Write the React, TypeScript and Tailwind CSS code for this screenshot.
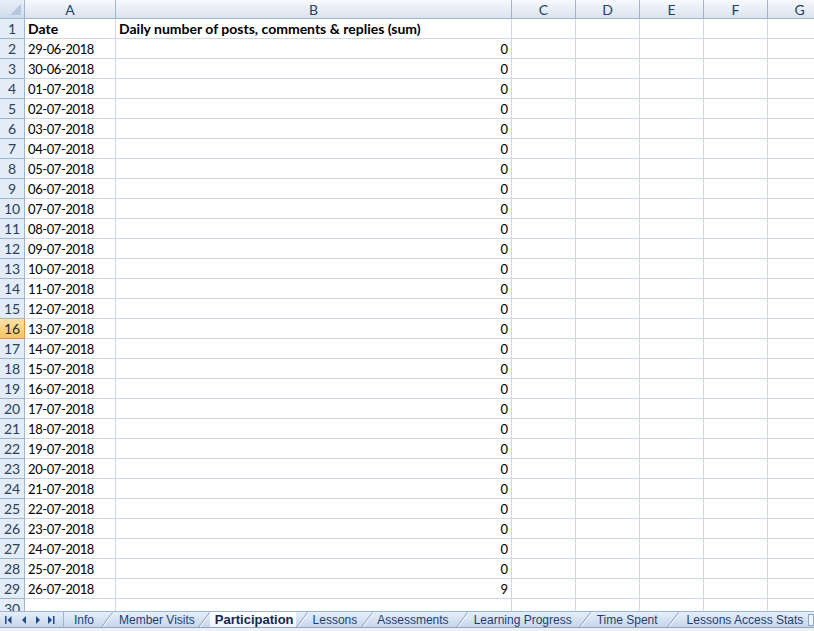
import React from "react";

const COLS = ["A", "B", "C", "D", "E", "F", "G", "H"];
const WIDTHS = ["w-[91px]", "w-[396px]", "w-[64px]", "w-[64px]", "w-[64px]", "w-[64px]", "w-[64px]", "w-[64px]"];

const START = new Date(2018, 5, 29);

function fmt(d: Date) {
  const dd = String(d.getDate()).padStart(2, "0");
  const mm = String(d.getMonth() + 1).padStart(2, "0");
  return `${dd}-${mm}-${d.getFullYear()}`;
}

const rows: { date: string; value: number }[] = Array.from({ length: 28 }, (_, i) => {
  const d = new Date(START);
  d.setDate(START.getDate() + i);
  return { date: fmt(d), value: i === 27 ? 9 : 0 };
});

// padding per tab so the labels sit where the sheet tabs are
const TABS: { name: string; pad: string }[] = [
  { name: "Info", pad: "pl-[10px] pr-[7px]" },
  { name: "Member Visits", pad: "pl-[6px] pr-[3px]" },
  { name: "Participation", pad: "pl-[5px] pr-[2px]" },
  { name: "Lessons", pad: "pl-[5px] pr-[4px]" },
  { name: "Assessments", pad: "pl-[4px] pr-[7px]" },
  { name: "Learning Progress", pad: "pl-[6px] pr-[7px]" },
  { name: "Time Spent", pad: "pl-[6px] pr-[9px]" },
  { name: "Lessons Access Stats", pad: "pl-[8px] pr-[3px]" },
];

const cellFont = { fontFamily: "Lato, 'Liberation Sans', sans-serif" };

const RowHead: React.FC<{ n: number; active?: boolean }> = ({ n, active }) => (
  <div
    className={`h-[20px] w-[25px] shrink-0 border-r border-b text-center text-[14px] leading-[20px] ${
      active
        ? "bg-gradient-to-b from-[#fbe2a8] to-[#f5c462] border-[#f29536] text-[#2b2b2b]"
        : "bg-[#e4ecf7] border-[#9eb6ce] text-[#27415f]"
    }`}
  >
    {n}
  </div>
);

const Slash: React.FC = () => (
  <svg width="12" height="15" viewBox="0 0 12 15" className="shrink-0">
    <line x1="0.5" y1="15" x2="11.5" y2="0.5" stroke="#8ea5c4" strokeWidth="1" />
    <line x1="2" y1="15" x2="12" y2="2" stroke="#f4f8fd" strokeWidth="1" />
  </svg>
);

const NavArrows: React.FC = () => (
  <svg width="63" height="15" viewBox="0 0 63 15" className="shrink-0">
    <g fill="#1f4c8f">
      <rect x="5" y="4" width="1.5" height="8" />
      <path d="M7.5 8 L11.5 4 L11.5 12 Z" />
      <path d="M22 8 L26 4 L26 12 Z" />
      <path d="M40 8 L36 4 L36 12 Z" />
      <path d="M52 8 L48 4 L48 12 Z" />
      <rect x="53" y="4" width="1.5" height="8" />
    </g>
  </svg>
);

export default function App() {
  return (
    <div className="w-[814px] h-[631px] overflow-hidden bg-white flex flex-col" style={cellFont}>
      <div className="flex-1 overflow-hidden">
        {/* column headers */}
        <div className="flex h-[19px]">
          <div className="relative w-[25px] h-[19px] shrink-0 border-r border-b border-[#9eb6ce] bg-gradient-to-b from-[#e9eff7] to-[#cfdcec]">
            <svg width="12" height="12" viewBox="0 0 12 12" className="absolute right-[2px] bottom-[2px]">
              <path d="M11 0 L11 11 L0 11 Z" fill="#b5c7de" />
            </svg>
          </div>
          {COLS.map((c, i) => (
            <div
              key={c}
              className={`${WIDTHS[i]} h-[19px] shrink-0 border-r border-b border-[#9eb6ce] bg-gradient-to-b from-[#f7f9fc] to-[#dbe3ee] text-center text-[14px] leading-[19px] text-[#27415f]`}
            >
              {c}
            </div>
          ))}
        </div>

        {/* row 1 */}
        <div className="flex">
          <RowHead n={1} />
          <div className="w-[91px] h-[20px] shrink-0 border-r border-b border-[#d0d7e5] px-[3px] text-[14px] leading-[20px] font-bold">
            Date
          </div>
          <div className="w-[396px] h-[20px] shrink-0 border-r border-b border-[#d0d7e5] px-[3px] text-[14px] leading-[20px] font-bold whitespace-nowrap">
            Daily number of posts, comments &amp; replies (sum)
          </div>
          {WIDTHS.slice(2).map((w, i) => (
            <div key={i} className={`${w} h-[20px] shrink-0 border-r border-b border-[#d0d7e5]`} />
          ))}
        </div>

        {rows.map((r, idx) => (
          <div key={r.date} className="flex">
            <RowHead n={idx + 2} active={idx + 2 === 16} />
            <div className="w-[91px] h-[20px] shrink-0 border-r border-b border-[#d0d7e5] px-[3px] text-[13px] tracking-[-0.4px] leading-[20px]">
              {r.date}
            </div>
            <div className="w-[396px] h-[20px] shrink-0 border-r border-b border-[#d0d7e5] px-[3px] text-right text-[13px] leading-[20px]">
              {r.value}
            </div>
            {WIDTHS.slice(2).map((w, i) => (
              <div key={i} className={`${w} h-[20px] shrink-0 border-r border-b border-[#d0d7e5]`} />
            ))}
          </div>
        ))}

        {/* row 30 */}
        <div className="flex">
          <RowHead n={30} />
          {WIDTHS.map((w, i) => (
            <div key={i} className={`${w} h-[20px] shrink-0 border-r border-b border-[#d0d7e5]`} />
          ))}
        </div>
      </div>

      {/* sheet tabs */}
      <div
        className="h-[20px] shrink-0 flex flex-col border-t border-[#9eb6ce] text-[12px] text-[#1f3f74] whitespace-nowrap"
        style={{ fontFamily: "'Liberation Sans', Arial, sans-serif" }}
      >
        <div className="h-[16px] flex items-stretch border-b border-[#8ea5c4] bg-gradient-to-b from-[#e6eef9] to-[#c7d6eb]">
          <NavArrows />
          <div className="w-0 border-l border-[#9eb6ce]" />
          {TABS.map((t, i) => {
            const active = t.name === "Participation";
            return (
              <div key={t.name} className="flex items-stretch">
                {i > 0 && <Slash />}
                <div
                  className={`flex items-center ${t.pad} ${
                    active ? "bg-gradient-to-b from-white to-[#eef3fa] font-bold text-[13px] text-[#15274f]" : ""
                  }`}
                >
                  {t.name}
                </div>
              </div>
            );
          })}
          <div className="ml-[2px] mt-[2px] w-[7px] h-[12px] border border-[#8ea5c4] bg-[#eef3fa]" />
        </div>
        <div className="flex-1 bg-[#eef1f6]" />
      </div>
    </div>
  );
}
